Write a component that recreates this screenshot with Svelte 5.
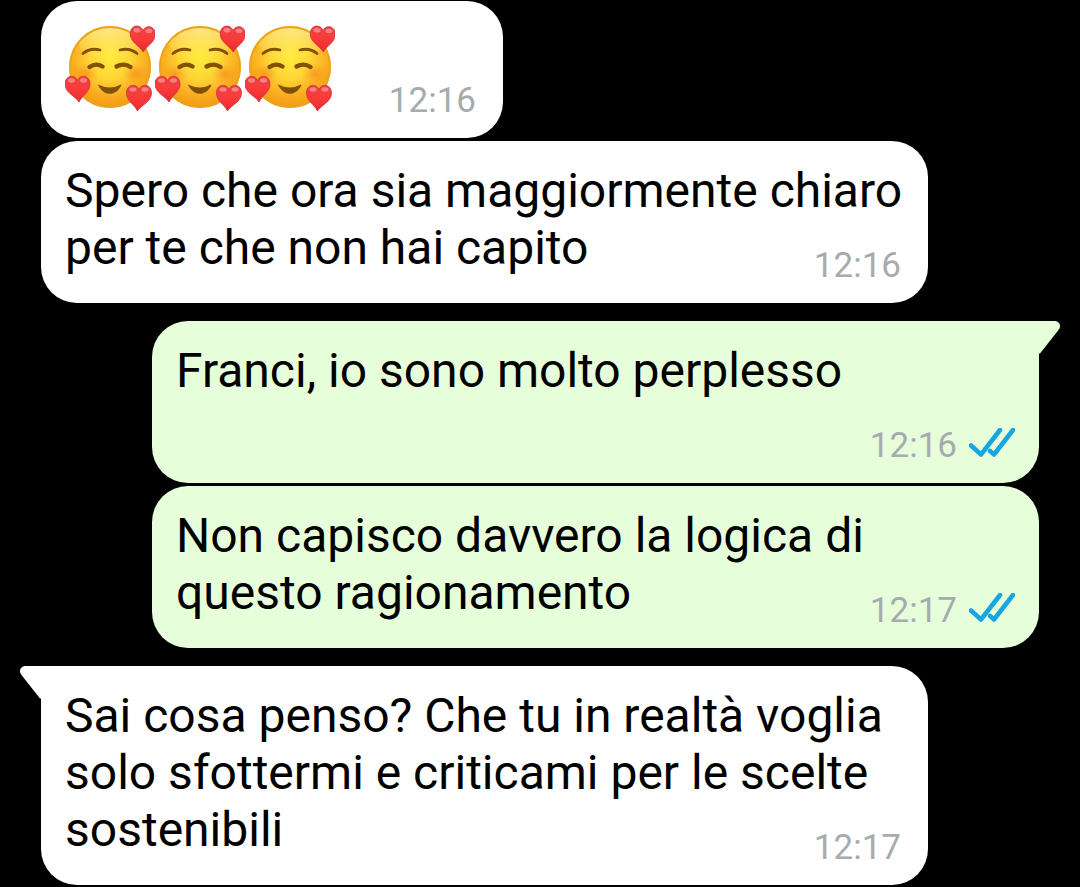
<script lang="ts">
  type Message = {
    from: 'me' | 'them';
    text?: string;
    emoji?: number;
    time: string;
    first?: boolean;
    wrapTime?: boolean;
  };

  const messages: Message[] = [
    { from: 'them', emoji: 3, time: '12:16' },
    {
      from: 'them',
      text: 'Spero che ora sia maggiormente chiaro per te che non hai capito',
      time: '12:16',
    },
    {
      from: 'me',
      text: 'Franci, io sono molto perplesso',
      time: '12:16',
      first: true,
      wrapTime: true,
    },
    {
      from: 'me',
      text: 'Non capisco davvero la logica di questo ragionamento',
      time: '12:17',
    },
    {
      from: 'them',
      text: 'Sai cosa penso? Che tu in realtà voglia solo sfottermi e criticami per le scelte sostenibili',
      time: '12:17',
      first: true,
    },
  ];
</script>

<svg class="defs" aria-hidden="true">
  <defs>
    <radialGradient id="face" cx="45" cy="34" r="52" gradientUnits="userSpaceOnUse">
      <stop offset="0" stop-color="#ffec3d" />
      <stop offset="0.4" stop-color="#fed535" />
      <stop offset="0.72" stop-color="#fbad20" />
      <stop offset="1" stop-color="#ef9712" />
    </radialGradient>
    <linearGradient id="shine" x1="0" y1="0" x2="0" y2="1">
      <stop offset="0" stop-color="#fff6b0" stop-opacity="0.7" />
      <stop offset="1" stop-color="#fff27a" stop-opacity="0" />
    </linearGradient>
    <radialGradient id="blush">
      <stop offset="0" stop-color="#f5811a" stop-opacity="0.6" />
      <stop offset="1" stop-color="#f99a1c" stop-opacity="0" />
    </radialGradient>
    <linearGradient id="heart-fill" x1="0" y1="0" x2="0" y2="1">
      <stop offset="0" stop-color="#ea4449" />
      <stop offset="0.5" stop-color="#fb3a38" />
      <stop offset="1" stop-color="#e32a33" />
    </linearGradient>
    <g id="heart">
      <path
        d="M14 26C11 20.500 0 17 0 8C0 -1 10 -2 12.500 4.500C15 -2 25 -1 25 8C25 16 17.500 19 14 26Z"
        fill="url(#heart-fill)"
        stroke="#d8303a"
        stroke-width="0.8"
      />
      <ellipse cx="6.500" cy="4.500" rx="3.500" ry="2.200" fill="#ffb5b5" opacity="0.55" />
      <ellipse cx="18.500" cy="4.500" rx="3.500" ry="2.200" fill="#ffb5b5" opacity="0.55" />
    </g>
    <symbol id="loving-face" viewBox="0 0 90 90">
      <circle cx="45" cy="43" r="41" fill="url(#face)" />
      <ellipse cx="45" cy="19" rx="31" ry="16" fill="url(#shine)" />
      <circle cx="45" cy="43" r="40" fill="none" stroke="#e9a51c" stroke-width="1.800" />
      <ellipse cx="20" cy="50" rx="14" ry="11" fill="url(#blush)" />
      <ellipse cx="70" cy="50" rx="14" ry="11" fill="url(#blush)" />
      <g fill="none" stroke="#825006" stroke-linecap="round">
        <path d="M18 29.500Q25 23.500 35 26" stroke-width="2.800" />
        <path d="M55 26Q65 23.500 72 29.500" stroke-width="2.800" />
        <path d="M24.500 43Q31 38.500 37.500 42.500" stroke-width="4.400" />
        <path d="M51.500 42.500Q59 38.500 65.500 43" stroke-width="4.400" />
      </g>
      <path d="M33 60.500Q45 66.500 56 60.500Q57 61 55.500 63C50 72 40 72 34.500 63.500Q33 61.500 33 60.500Z" fill="#825006" />
      <use href="#heart" x="65" y="2" transform="rotate(3 77 15)" />
      <use href="#heart" x="0" y="52" />
      <use href="#heart" transform="translate(86.500 61) scale(-1 1)" />
    </symbol>
  </defs>
</svg>

<main class="chat">
  {#each messages as msg}
    <article class="bubble {msg.from}" class:first={msg.first} class:short={msg.emoji}>
      {#if msg.first}
        <svg class="tail" viewBox="0 0 21 33" aria-hidden="true">
          <path d="M21 0H6C1 0 -2 4.500 1.500 9L20 32.500H21Z" />
        </svg>
      {/if}
      {#if msg.emoji}
        <div class="emoji">
          {#each { length: msg.emoji } as _}
            <svg class="face" role="img" aria-label="🥰"><use href="#loving-face" /></svg>
          {/each}
        </div>
      {:else}
        <p class="text">{msg.text}</p>
      {/if}
      <footer class="meta" class:wrapped={msg.wrapTime}>
        <time>{msg.time}</time>
        {#if msg.from === 'me'}
          <svg class="ticks" viewBox="0 0 46 30" role="img" aria-label="Letto">
            <path d="M2 17.500L12 26.500L31 2M21 23L25 26.500L44 2" />
          </svg>
        {/if}
      </footer>
    </article>
  {/each}
</main>

<style>
  :global(body) {
    background: #000;
  }

  .defs {
    position: absolute;
    width: 0;
    height: 0;
  }

  .chat {
    display: flex;
    flex-direction: column;
    gap: 3px;
    padding: 1px 41px 2px;
    font-family: Roboto, 'Liberation Sans', sans-serif;
  }

  .bubble {
    --bubble-bg: #fff;
    position: relative;
    box-sizing: border-box;
    display: grid;
    align-items: end;
    width: calc(100% - 111px);
    padding: 21px 24px 19px;
    border-radius: 36px;
    background: var(--bubble-bg);
  }

  .short {
    display: flex;
    justify-content: space-between;
    width: auto;
    min-width: 462px;
  }

  .them {
    align-self: flex-start;
  }

  .me {
    --bubble-bg: #e6ffda;
    align-self: flex-end;
  }

  .first {
    margin-top: 15px;
  }

  .them.first {
    border-top-left-radius: 0;
  }

  .me.first {
    border-top-right-radius: 0;
  }

  .tail {
    position: absolute;
    top: 0;
    right: 100%;
    width: 21px;
    height: 33px;
    fill: var(--bubble-bg);
  }

  .me .tail {
    right: auto;
    left: 100%;
    transform: scaleX(-1);
  }

  .emoji {
    display: flex;
    padding: 2px 0 5px;
  }

  .face {
    width: 90px;
    height: 90px;
  }

  .text {
    grid-area: 1 / 1;
    margin: 0 0 8px;
    color: #000;
    font-size: 48px;
    line-height: 57px;
  }

  .meta {
    grid-area: 1 / 1;
    justify-self: end;
    display: flex;
    align-items: flex-start;
    gap: 12px;
    color: #a6acae;
    font-size: 35px;
    line-height: 36px;
  }

  .them .meta {
    margin-right: 3px;
  }

  .meta.wrapped {
    grid-area: 2 / 1;
    margin-top: 21px;
  }

  .ticks {
    width: 46px;
    height: 30px;
    fill: none;
    stroke: #17a6e4;
    stroke-width: 4.5;
    stroke-linecap: round;
    stroke-linejoin: round;
  }
</style>
